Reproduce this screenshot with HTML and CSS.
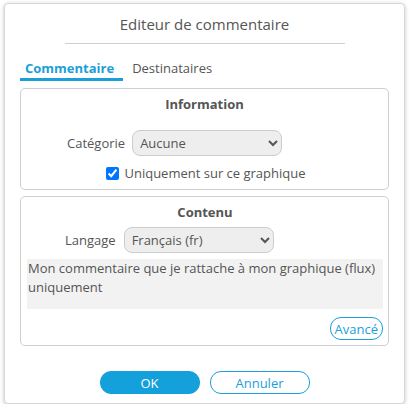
FILE: index.html
```html
<!DOCTYPE html>
<html lang="fr">
<head>
<meta charset="utf-8">
<title>Editeur de commentaire</title>
<link rel="stylesheet" href="styles.css">
</head>
<body>
<div class="dialog">
  <div class="title">Editeur de commentaire</div>
  <div class="sep"></div>
  <div class="tabs">
    <div class="tab active">Commentaire</div>
    <div class="tab">Destinataires</div>
  </div>
  <div class="box box-info">
    <div class="box-title">Information</div>
    <div class="row row-cat">
      <label class="lbl">Catégorie</label>
      <select class="sel"><option>Aucune</option></select>
    </div>
    <div class="check-row">
      <input type="checkbox" class="chk" checked>
      <span>Uniquement sur ce graphique</span>
    </div>
  </div>
  <div class="box box-content">
    <div class="box-title">Contenu</div>
    <div class="row row-lang">
      <label class="lbl">Langage</label>
      <select class="sel"><option>Français (fr)</option></select>
    </div>
    <div class="text">Mon commentaire que je rattache à mon graphique (flux) uniquement</div>
    <div class="adv-row"><button class="adv">Avancé</button></div>
  </div>
  <div class="footer">
    <button class="btn btn-ok">OK</button>
    <button class="btn btn-cancel">Annuler</button>
  </div>
</div>
</body>
</html>
```
FILE: styles.css
```css
html, body {
  margin: 0;
  padding: 0;
  background: #ffffff;
}
body {
  font-family: "Open Sans", "Liberation Sans", sans-serif;
  font-size: 13px;
  color: #555555;
  padding: 3px 0 0 4px;
}
.dialog {
  box-sizing: border-box;
  width: 401px;
  height: 401px;
  border: 1px solid #d6d6d6;
  border-radius: 4px;
  box-shadow: 0 1px 4px rgba(0, 0, 0, 0.22);
  padding: 10px 15px 0;
  background: #fff;
}
.title {
  font-size: 15px;
  line-height: 20px;
  text-align: center;
  color: #555;
}
.sep {
  width: 280px;
  height: 1px;
  margin: 9px auto 0;
  background: #cfcfcf;
}
.tabs {
  display: flex;
  gap: 4px;
  margin-top: 12px;
}
.tab {
  line-height: 20px;
  padding: 2px 9px 0 5px;
  border-bottom: 3px solid transparent;
  color: #555;
}
.tab.active {
  font-weight: bold;
  color: #1a9fd9;
  border-bottom-color: #1a9fd9;
}
.box {
  border: 1px solid #cfcfcf;
  border-radius: 5px;
  margin-top: 7px;
}
.box-info {
  padding: 5px 0 6px;
}
.box-content {
  margin-top: 6px;
  padding: 5px 5px 5px 6px;
}
.box-title {
  font-weight: bold;
  line-height: 20px;
  text-align: center;
  color: #555;
}
.row {
  display: flex;
  align-items: center;
}
.row-cat {
  margin-top: 16px;
  padding-left: 46px;
  gap: 7px;
}
.row-lang {
  margin-top: 5px;
  padding-left: 38px;
  gap: 8px;
}
.lbl {
  line-height: 20px;
}
.sel {
  width: 150px;
  height: 26px;
  box-sizing: border-box;
  border: 1px solid #cccccc;
  border-radius: 8px;
  background-color: #eeeeee;
  font-family: "Open Sans", "Liberation Sans", sans-serif;
  font-size: 13px;
  color: #555;
  padding: 0 3px;
}
.check-row {
  display: flex;
  align-items: center;
  justify-content: center;
  margin-top: 7px;
  line-height: 20px;
  padding-left: 3px;
}
.chk {
  width: 13px;
  height: 13px;
  margin: 0 5px 0 0;
}
.text {
  margin-top: 6px;
  height: 50px;
  box-sizing: border-box;
  background: #f2f2f2;
  padding: 0 1px;
  line-height: 19px;
  color: #555;
}
.adv-row {
  display: flex;
  justify-content: flex-end;
  margin-top: 8px;
}
.adv {
  height: 23px;
  box-sizing: border-box;
  border: 1px solid #1a9fd9;
  border-radius: 11px;
  background: #fff;
  color: #1a9fd9;
  font-family: "Open Sans", "Liberation Sans", sans-serif;
  font-size: 13px;
  padding: 0 4px;
  line-height: 20px;
}
.footer {
  display: flex;
  justify-content: center;
  gap: 10px;
  margin-top: 25px;
}
.btn {
  width: 100px;
  height: 23px;
  box-sizing: border-box;
  border-radius: 11px;
  font-family: "Open Sans", "Liberation Sans", sans-serif;
  font-size: 13px;
  line-height: 20px;
  padding: 0;
}
.btn-ok {
  background: #14a0da;
  border: 1px solid #14a0da;
  color: #ffffff;
}
.btn-cancel {
  background: #ffffff;
  border: 1px solid #1a9fd9;
  color: #1a9fd9;
}
```
